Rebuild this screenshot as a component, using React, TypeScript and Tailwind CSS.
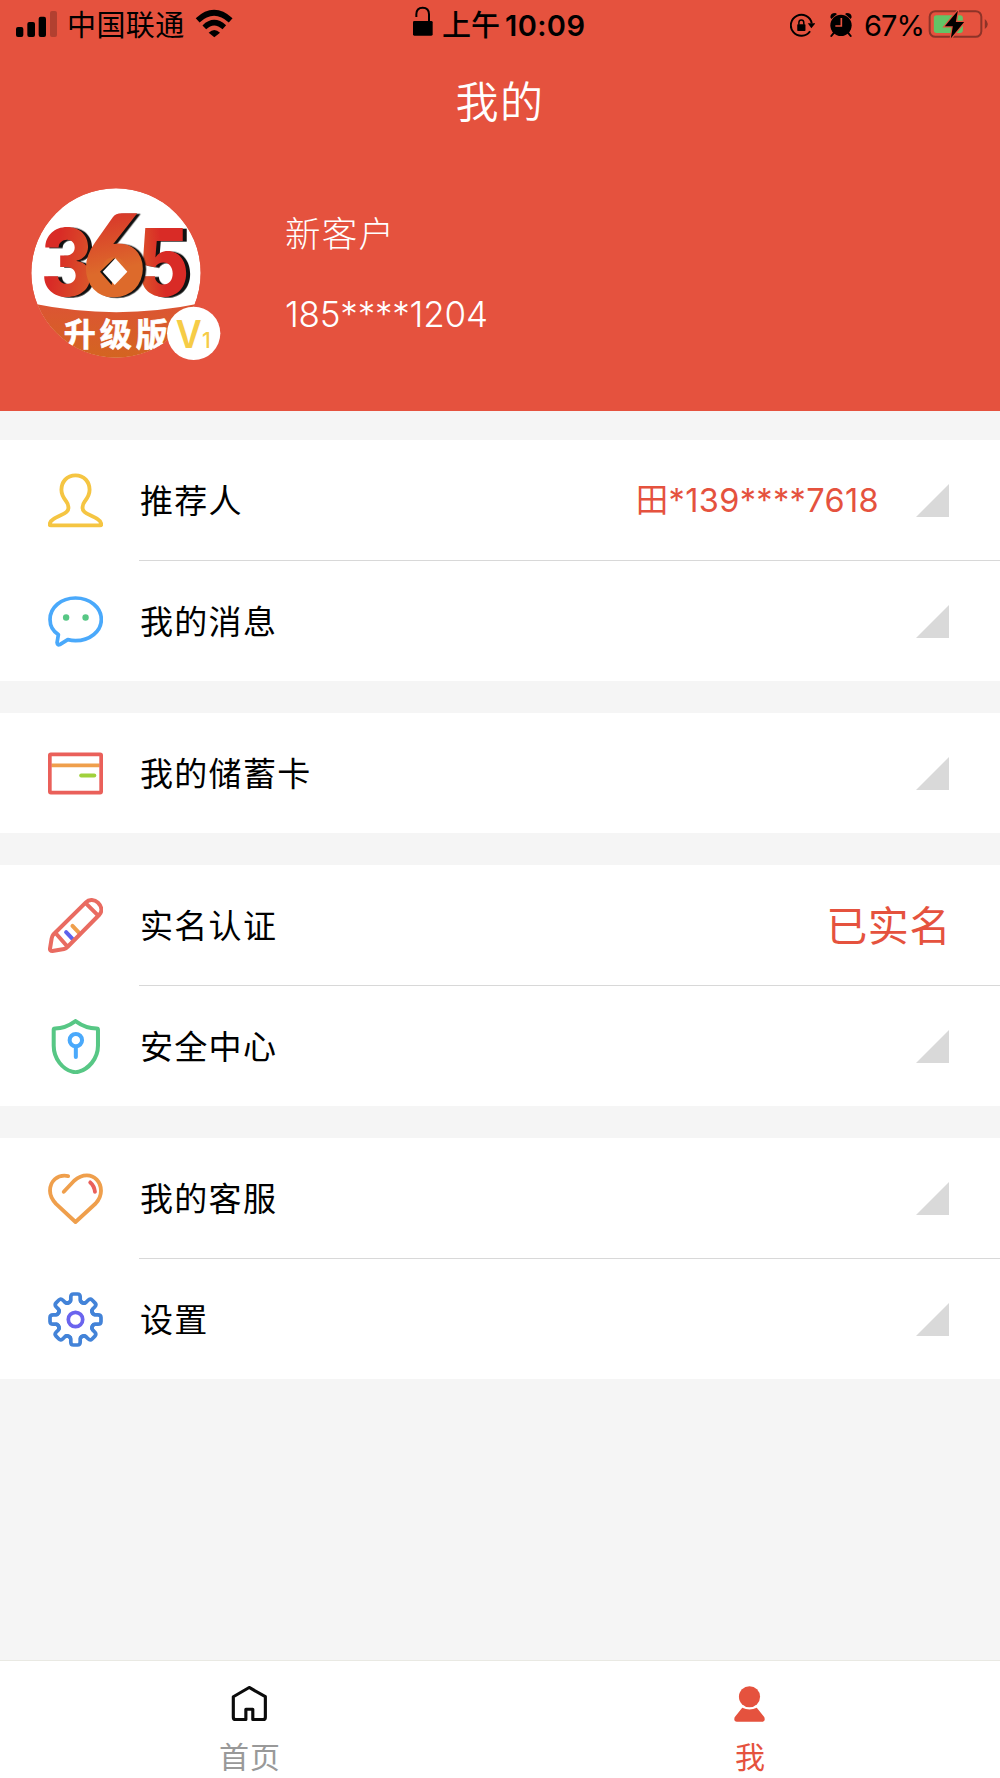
import React from "react";

type MenuItem = {
  label: string;
  icon: React.ReactNode;
  value?: React.ReactNode;
  arrow?: boolean;
};

const PersonIcon = () => (
  <svg viewBox="0 0 164 164" className="size-[55px]" fill="none" stroke="#f5c542" strokeWidth="11.500" strokeLinejoin="round">
    <path d="M82 7C56 7 40 27 40 50C40 64 46 74 54 84C62 95 63 108 57 114C48 124 29 129 17 137C9 142 5 149 5 154Q5 156 9 156H155Q159 156 159 153C158 147 155 142 147 137C135 129 116 124 107 114C101 108 102 95 110 84C118 74 124 64 124 50C124 27 108 7 82 7Z" />
  </svg>
);

const MessageIcon = () => (
  <svg viewBox="0 0 164 164" className="size-[55px]" fill="none">
    <path
      d="M82 12C39 12 6 40 6 76C6 96 15 111 31 121L27 145Q28 154 35 151L59 136Q71 139 82 139C125 139 159 111 159 76C159 40 125 12 82 12Z"
      stroke="#4aa9fb"
      strokeWidth="11"
      strokeLinejoin="round"
    />
    <circle cx="54" cy="70" r="9.500" fill="#57c785" />
    <circle cx="112" cy="70" r="9.500" fill="#57c785" />
  </svg>
);

const CardIcon = () => (
  <svg viewBox="0 0 164 164" className="size-[55px]" fill="none">
    <path d="M10 58H154" stroke="#ef9f4c" strokeWidth="11" />
    <rect x="5.500" y="25" width="153" height="114" rx="3" stroke="#ea605a" strokeWidth="11" />
    <path d="M99 88H138" stroke="#a0d13c" strokeWidth="12" strokeLinecap="round" />
  </svg>
);

const PencilIcon = () => (
  <svg viewBox="0 0 164 164" className="size-[55px]" fill="none" strokeWidth="12" strokeLinecap="round" strokeLinejoin="round">
    <path d="M54 102L73 122" stroke="#5d62ec" />
    <path d="M73 83L92 103" stroke="#ef9f4c" />
    <path
      d="M113 13C123 3 139 4 149 14C161 26 162 40 153 50L58 146Q54 151 48 152L13 158Q5 158 6 151L11 120Q12 114 16 109ZM113 16L149 52M23 105L57 144"
      stroke="#e96b61"
    />
  </svg>
);

const ShieldIcon = () => (
  <svg viewBox="0 0 164 164" className="size-[55px]" fill="none" strokeLinecap="round" strokeLinejoin="round">
    <path
      d="M82 6C64 19 43 28 21 28Q17 28 17 32V80C17 120 45 150 72 157Q82 160 92 157C119 150 149 120 149 80V32Q149 28 145 28C121 28 100 19 82 6Z"
      stroke="#57c785"
      strokeWidth="12"
    />
    <circle cx="83" cy="63" r="18.500" stroke="#4aa9fb" strokeWidth="12" />
    <path d="M83 84V113" stroke="#4aa9fb" strokeWidth="12" />
  </svg>
);

const HeartIcon = () => (
  <svg viewBox="0 0 164 164" className="size-[55px]" fill="none" strokeWidth="11.500" strokeLinecap="round">
    <path
      d="M60 15C27 9 6 31 6 59C6 75 11 84 24 98L82 152L142 97C153 85 158 75 158 59C158 31 138 13 116 13C96 13 87 21 78 29L47 62"
      stroke="#ef9f4c"
      strokeLinejoin="round"
    />
    <path d="M126 34Q138 44 140 62" stroke="#ea605a" />
  </svg>
);

const TEETH = [0, 45, 90, 135, 180, 225, 270, 315];

const GearIcon = () => (
  <svg viewBox="0 0 164 164" className="size-[55px]" fill="none">
    <g stroke="#4383d8" strokeWidth="11" strokeLinecap="round">
      {TEETH.map((deg) => (
        <path
          key={deg}
          d="M54 32C61 34 68 30 68 23V15Q68 6 76 6H88Q96 6 96 15V24C96 31 105 35 111 32"
          transform={`rotate(${deg} 82 82)`}
        />
      ))}
    </g>
    <circle cx="82" cy="82" r="21.500" stroke="#6a64ee" strokeWidth="11" />
  </svg>
);

const Logo = () => (
  <svg viewBox="0 0 660 600" className="h-[200px] w-[220px]">
    <defs>
      <clipPath id="avatar">
        <circle cx="288" cy="294" r="254" />
      </clipPath>
      <linearGradient id="three" x1="0" x2="1" y1="0" y2="0.400">
        <stop offset="0.400" stopColor="#d92b26" />
        <stop offset="1" stopColor="#d9532a" />
      </linearGradient>
      <linearGradient id="six" x1="0.300" x2="0.400" y1="0" y2="1">
        <stop offset="0.200" stopColor="#d8352a" />
        <stop offset="0.650" stopColor="#dd6a2b" />
      </linearGradient>
      <linearGradient id="five" x1="0" x2="1" y1="0.600" y2="0.400">
        <stop offset="0" stopColor="#dc5a2b" />
        <stop offset="0.500" stopColor="#d92b26" />
      </linearGradient>
      <linearGradient id="band" x1="0" x2="0" y1="0" y2="1">
        <stop offset="0" stopColor="#dc5434" />
        <stop offset="1" stopColor="#d3661f" />
      </linearGradient>
    </defs>
    <g clipPath="url(#avatar)">
      <circle cx="288" cy="294" r="254" fill="#fff" />
      <path d="M34 385Q290 438 542 385V560H34Z" fill="url(#band)" />
      <g className="[filter:drop-shadow(12px_2px_0_#111)]" fontFamily="Inter, sans-serif" fontWeight="800" fontSize="280">
        <text x="62" y="362" textLength="158" lengthAdjust="spacingAndGlyphs" fill="url(#three)">3</text>
        <text x="350" y="362" textLength="158" lengthAdjust="spacingAndGlyphs" fill="url(#five)">5</text>
      </g>
      <g className="[filter:drop-shadow(10px_2px_0_#111)]">
        <circle cx="283" cy="290" r="55" fill="#dd6a2b" />
        <text
          x="190"
          y="359"
          textLength="184"
          lengthAdjust="spacingAndGlyphs"
          fontFamily="Lato, sans-serif"
          fontWeight="900"
          fontSize="332"
          fill="url(#six)"
          stroke="url(#six)"
          strokeWidth="8"
        >
          6
        </text>
      </g>
      <path d="M284 248L240 290L275 330Z" fill="#111" />
      <path d="M286 250L322 290L284 330L248 290Z" fill="#fff" />
      <text
        x="131"
        y="512"
        fontFamily="'Noto Sans CJK SC', sans-serif"
        fontWeight="700"
        fontSize="96"
        textLength="312"
        fill="#fff"
        stroke="#fff"
        strokeWidth="2"
      >
        升级版
      </text>
    </g>
    <circle cx="521" cy="475" r="80" fill="#fff" />
    <g fontFamily="Inter, sans-serif" fill="#f6cc46">
      <text x="467" y="519" fontSize="114" fontWeight="600" textLength="78" lengthAdjust="spacingAndGlyphs">V</text>
      <text x="546" y="519" fontSize="63" fontWeight="500">1</text>
    </g>
  </svg>
);

const StatusBar = () => (
  <div className="flex h-[50px] items-start text-[29px] leading-[52px] text-black">
    <div className="flex w-[413px] items-start pl-4">
      <svg viewBox="48 0 126 150" className="h-[50px] w-[42px]">
        <rect x="48" y="81" width="22" height="30" rx="6" />
        <rect x="82" y="66" width="23" height="45" rx="6" />
        <rect x="116" y="50" width="22" height="61" rx="6" />
        <rect x="150" y="33" width="21" height="78" rx="6" opacity="0.220" />
      </svg>
      <span className="ml-[9px] w-[118px] tracking-[0.400px]">中国联通</span>
      <svg viewBox="585 0 114 150" className="ml-[10px] h-[50px] w-[38px]" fill="none" stroke="#000" strokeWidth="14">
        <path d="M593 61Q642 16 692 61" strokeWidth="17" />
        <path d="M613 82Q642 54 673 82" strokeWidth="16" />
        <path d="M626 98Q643 82 660 98L643 112Z" fill="#000" stroke="none" />
      </svg>
    </div>
    <div className="flex w-[377px] items-start">
      <svg viewBox="69 0 60 150" className="h-[50px] w-5">
        <rect x="69" y="63" width="59" height="44" rx="4" />
        <path d="M79 51V43Q79 23 98 23Q117 23 117 43V65" fill="none" stroke="#000" strokeWidth="6" />
      </svg>
      <span className="ml-[9px] font-medium">上午</span>
      <span className="ml-[5px] font-semibold tracking-[0.400px]">10:09</span>
    </div>
    <div className="flex items-start">
      <svg viewBox="60 0 76 150" className="h-[50px] w-[25px]">
        <path d="M121 94A32 32 0 1 1 126 70" fill="none" stroke="#000" strokeWidth="6" />
        <path d="M114 70H137L125 85Z" />
        <rect x="82" y="73" width="25" height="20" rx="2" />
        <path d="M87 74V68Q87 60 94.500 60Q102 60 102 68V74" fill="none" stroke="#000" strokeWidth="4.500" />
      </svg>
      <svg viewBox="180 0 66 150" className="ml-[15px] h-[50px] w-[22px]">
        <circle cx="213" cy="76" r="32" />
        <path d="M181 52Q181 39 196 39L201 42L184 57ZM245 52Q245 39 230 39L225 42L242 57Z" />
        <path d="M192 98L184 108M234 98L242 108" stroke="#000" strokeWidth="6" strokeLinecap="round" />
        <path d="M214 54V78H196" fill="none" stroke="#e5523e" strokeWidth="5" />
      </svg>
      <span className="ml-[12px] w-[62px] tracking-[-0.900px]">67%</span>
      <svg viewBox="472 0 182 150" className="ml-[2px] h-[50px] w-[61px]">
        <rect x="476.500" y="33.500" width="155" height="77" rx="17" fill="none" stroke="#8d3328" strokeWidth="6" />
        <path d="M642 57Q651 64 651 72Q651 80 642 87Z" fill="#8d3328" />
        <rect x="489" y="46" width="87" height="53" rx="8" fill="#63c466" />
        <path d="M561 32L522 79H546L540 115L580 66H555Z" fill="#000" stroke="#e5523e" strokeWidth="7" paintOrder="stroke" />
      </svg>
    </div>
  </div>
);

const Arrow = () => (
  <svg viewBox="0 0 33 33" className="size-[33px]">
    <path d="M33 0V33H0Z" fill="#d9d9d9" />
  </svg>
);

const GROUPS: MenuItem[][] = [
  [
    {
      label: "推荐人",
      icon: <PersonIcon />,
      value: <span className="mr-[37px] pt-[3px] text-[32.500px] tracking-[0.350px]">田*139****7618</span>,
      arrow: true,
    },
    { label: "我的消息", icon: <MessageIcon />, arrow: true },
  ],
  [{ label: "我的储蓄卡", icon: <CardIcon />, arrow: true }],
  [
    {
      label: "实名认证",
      icon: <PencilIcon />,
      value: <span className="-mr-[2px] pt-[3px] text-[41px] tracking-[0.600px]">已实名</span>,
    },
    { label: "安全中心", icon: <ShieldIcon />, arrow: true },
  ],
  [
    { label: "我的客服", icon: <HeartIcon />, arrow: true },
    { label: "设置", icon: <GearIcon />, arrow: true },
  ],
];

const MenuRow = ({ item, divided }: { item: MenuItem; divided: boolean }) => (
  <div className="flex items-center pl-12">
    {item.icon}
    <div
      className={`ml-9 flex flex-1 items-center pr-[51px] ${divided ? "h-[121px] border-b border-[#d8d8d8]" : "h-[120px]"}`}
    >
      <span className="pt-[3px] pl-px text-[33px] tracking-[1.300px] text-black">{item.label}</span>
      <div className="ml-auto flex items-center text-[#e5523e]">
        {item.value}
        {item.arrow && <Arrow />}
      </div>
    </div>
  </div>
);

const TabBar = () => (
  <nav className="mt-auto grid h-[118px] grid-cols-2 border-t border-[#e9e9e3] bg-white text-[30px]">
    <div className="flex flex-col items-center pt-6 text-[#999]">
      <svg viewBox="94 135 112 114" className="mr-px h-[38px] w-[37px]" fill="none" stroke="#0b0b0b" strokeWidth="9.500" strokeLinejoin="round">
        <path d="M149 142L101 170V232Q101 239 108 239H139V208H160V239H191Q198 239 198 232V170Z" />
      </svg>
      <span className="mt-[12px] leading-[44px] tracking-[1px]">首页</span>
    </div>
    <div className="flex flex-col items-center pt-6 text-[#e5523e]">
      <svg viewBox="94 135 112 114" className="mr-px h-[38px] w-[37px]" fill="currentColor">
        <circle cx="150" cy="170" r="32" />
        <path d="M128 203Q150 214 172 203L195 232Q199 246 188 246H112Q101 246 105 232Z" />
      </svg>
      <span className="mt-[12px] leading-[44px]">我</span>
    </div>
  </nav>
);

const App = () => (
  <div className="flex h-[1778px] w-[1000px] flex-col overflow-hidden bg-[#f5f5f5] font-[Inter,'Noto_Sans_CJK_SC',sans-serif]">
    <header className="h-[411px] bg-[#e5523e] text-white">
      <StatusBar />
      <h1 className="pt-[20px] text-center text-[43px] leading-[64px] font-[350] tracking-[1.500px]">我的</h1>
      <div className="mt-[41px] flex pl-5">
        <Logo />
        <div className="ml-[45px] pt-[33px] font-light">
          <p className="text-[35.500px] leading-[54px] tracking-[1.300px]">新客户</p>
          <p className="mt-[25px] text-[35px] leading-[54px] tracking-[-0.200px]">185****1204</p>
        </div>
      </div>
    </header>
    <main className="flex flex-col gap-8 pt-[29px]">
      {GROUPS.map((group) => (
        <section key={group[0].label} className="bg-white">
          {group.map((item, i) => (
            <MenuRow key={item.label} item={item} divided={i < group.length - 1} />
          ))}
        </section>
      ))}
    </main>
    <TabBar />
  </div>
);

export default App;
